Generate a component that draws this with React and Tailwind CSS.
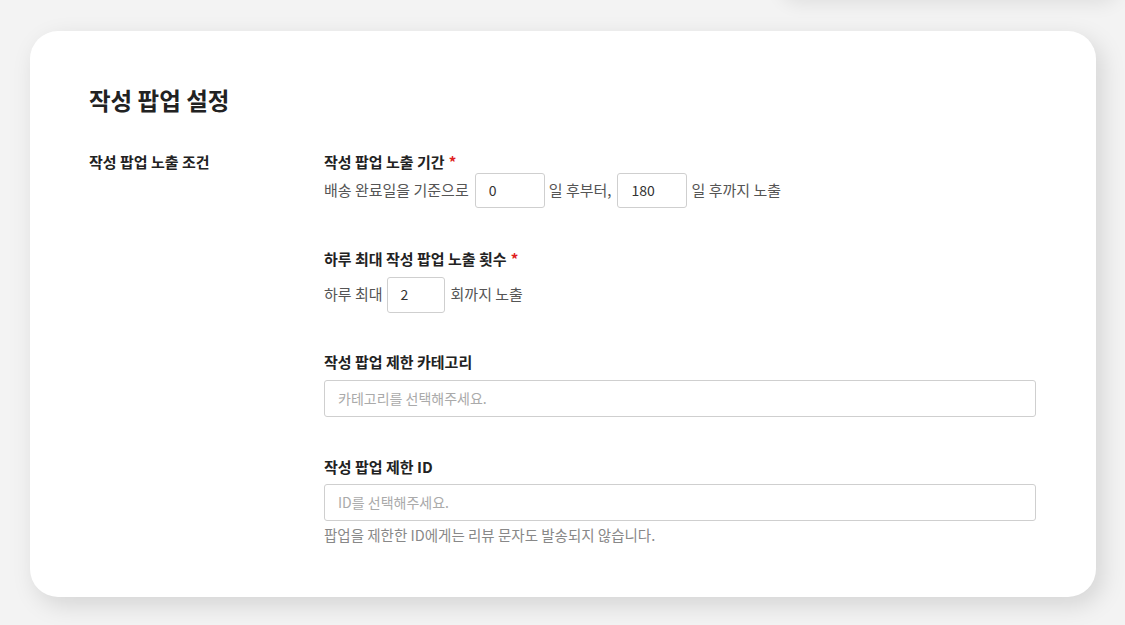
/*
 * 작성 팝업 설정 카드
 */

const font = { fontFamily: '"Noto Sans CJK KR", "Noto Sans", sans-serif' }

function Required() {
  return <span className="ml-1 text-[#e02020]">*</span>
}

function SmallInput({ value, width }) {
  return (
    <div
      className={`${width} h-[35px] flex items-center px-[13px] rounded-[3px] border border-[#cfcfcf] text-[14px] text-[#333]`}
    >
      {value}
    </div>
  )
}

function WideInput({ placeholder }) {
  return (
    <div className="h-[37px] w-[712px] flex items-center px-[13px] rounded-[3px] border border-[#cfcfcf] text-[14px] text-[#aaa]">
      {placeholder}
    </div>
  )
}

export default function App() {
  return (
    <div style={font} className="w-[1125px] h-[625px] bg-[#f3f3f3] overflow-hidden relative">
      {/* 위쪽 카드 그림자 */}
      <div className="absolute -top-[40px] left-[780px] w-[340px] h-[40px] rounded-[28px] bg-[#f3f3f3] shadow-[0_4px_18px_rgba(0,0,0,0.08)]" />

      <div className="pt-[31px] pl-[30px]">
        <div className="w-[1066px] h-[566px] bg-white rounded-[28px] shadow-[6px_8px_24px_rgba(0,0,0,0.13)] pt-[58px] pl-[59px]">
          <h2 className="text-[23.5px] font-bold text-[#222] leading-none">작성 팝업 설정</h2>

          <div className="flex mt-[39px]">
            <div className="w-[235px] text-[15px] font-bold text-[#222] leading-[20px]">작성 팝업 노출 조건</div>

            <div className="flex flex-col">
              <div className="text-[15px] font-bold text-[#222] leading-[20px]">
                작성 팝업 노출 기간<Required />
              </div>
              <div className="flex items-center mt-[1px] text-[15px] text-[#555]">
                <span>배송 완료일을 기준으로</span>
                <SmallInput value="0" width="w-[70px] ml-[6px] mr-[4px]" />
                <span>일 후부터,</span>
                <SmallInput value="180" width="w-[70px] ml-[6px] mr-[4px]" />
                <span>일 후까지 노출</span>
              </div>

              <div className="mt-[41px] text-[15px] font-bold text-[#222] leading-[20px]">
                하루 최대 작성 팝업 노출 횟수<Required />
              </div>
              <div className="flex items-center mt-[8px] text-[15px] text-[#555]">
                <span>하루 최대</span>
                <SmallInput value="2" width="w-[58px] h-[36px] ml-[4px] mr-[6px]" />
                <span>회까지 노출</span>
              </div>

              <div className="mt-[39px] text-[15px] font-bold text-[#222] leading-[20px]">작성 팝업 제한 카테고리</div>
              <div className="mt-[8px]">
                <WideInput placeholder="카테고리를 선택해주세요." />
              </div>

              <div className="mt-[40px] text-[15px] font-bold text-[#222] leading-[20px]">작성 팝업 제한 ID</div>
              <div className="mt-[7px]">
                <WideInput placeholder="ID를 선택해주세요." />
              </div>
              <div className="mt-[5px] text-[14.5px] text-[#888] leading-[18px]">
                팝업을 제한한 ID에게는 리뷰 문자도 발송되지 않습니다.
              </div>
            </div>
          </div>
        </div>
      </div>
    </div>
  )
}
